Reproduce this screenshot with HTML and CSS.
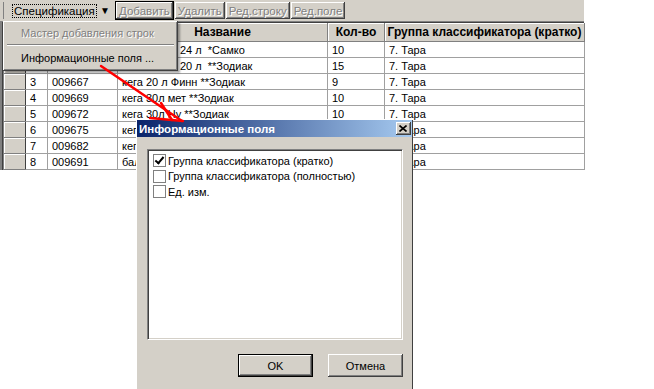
FILE: index.html
```html
<!DOCTYPE html>
<html lang="ru">
<head>
  <meta charset="UTF-8" />
  <title>Спецификация</title>
  <link rel="stylesheet" href="styles.css">
</head>
<body>
  <div class="app">
    <div class="toolbar">
      <button class="tb-btn tb-menu"><span class="focus">Спецификация</span><span class="caret">&#9660;</span></button>
      <button class="tb-btn tb-default" disabled>Добавить</button>
      <button class="tb-btn" disabled>Удалить</button>
      <button class="tb-btn" disabled>Ред.строку</button>
      <button class="tb-btn" disabled>Ред.поле</button>
    </div>

    <div class="grid">
      <table>
        <colgroup>
          <col class="c-hdr"><col class="c-num"><col class="c-code"><col class="c-name"><col class="c-qty"><col class="c-group">
        </colgroup>
        <thead>
          <tr>
            <th></th><th></th><th></th>
            <th>Название</th>
            <th>Кол-во</th>
            <th>Группа классификатора (кратко)</th>
          </tr>
        </thead>
        <tbody>
          <tr><td class="rh"></td><td>1</td><td>009660</td><td>кега пласт. 24 л  *Самко</td><td>10</td><td>7. Тара</td></tr>
          <tr><td class="rh"></td><td>2</td><td>009664</td><td>кега пласт. 20 л  **Зодиак</td><td>15</td><td>7. Тара</td></tr>
          <tr><td class="rh"></td><td>3</td><td>009667</td><td>кега 20 л Финн **Зодиак</td><td>9</td><td>7. Тара</td></tr>
          <tr><td class="rh"></td><td>4</td><td>009669</td><td>кега 30л мет **Зодиак</td><td>10</td><td>7. Тара</td></tr>
          <tr><td class="rh"></td><td>5</td><td>009672</td><td>кега 30л Ну **Зодиак</td><td>10</td><td>7. Тара</td></tr>
          <tr><td class="rh"></td><td>6</td><td>009675</td><td>кега 50 л **Зодиак</td><td>10</td><td>7. Тара</td></tr>
          <tr><td class="rh"></td><td>7</td><td>009682</td><td>кега 50 л мет **Самко</td><td>10</td><td>7. Тара</td></tr>
          <tr><td class="rh"></td><td>8</td><td>009691</td><td>баллон СО2 **Зодиак</td><td>10</td><td>7. Тара</td></tr>
        </tbody>
      </table>
    </div>
  </div>

  <!-- выпадающее меню кнопки "Спецификация" -->
  <div class="menu">
    <div class="menu-item disabled">Мастер добавления строк</div>
    <div class="menu-sep"></div>
    <div class="menu-item">Информационные поля ...</div>
  </div>

  <!-- окно выбора полей -->
  <div class="dialog">
    <div class="dlg-title">
      <span>Информационные поля</span>
      <span class="dlg-close">
        <svg width="8" height="7" viewBox="0 0 8 7"><path d="M0.5 0.5 L7.5 6.5 M7.5 0.5 L0.5 6.5" /></svg>
      </span>
    </div>
    <div class="dlg-body">
      <div class="fields">
        <label class="field"><span class="check on"></span>Группа классификатора (кратко)</label>
        <label class="field"><span class="check"></span>Группа классификатора (полностью)</label>
        <label class="field"><span class="check"></span>Ед. изм.</label>
      </div>
      <div class="dlg-buttons">
        <button class="btn btn-default">OK</button>
        <button class="btn">Отмена</button>
      </div>
    </div>
  </div>

  <svg class="pointer" width="654" height="389" viewBox="0 0 654 389">
    <line x1="101" y1="66" x2="182" y2="121" />
    <line x1="161" y1="103" x2="172" y2="120" />
    <line x1="150" y1="118" x2="183" y2="121" />
  </svg>
</body>
</html>
```

FILE: styles.css
```css
body {
  margin: 0;
  background: #fff;
  font-family: 'Liberation Sans', Arial, sans-serif;
  font-size: 11px;
  color: #000;
}

.app {
  width: 584px;
}

.toolbar {
  display: flex;
  gap: 1px;
  height: 21px;
  padding: 2px 0 0 3px;
  box-sizing: border-box;
  background: #d4d0c8;
}

.tb-btn {
  height: 17px;
  padding: 0 3px;
  font: inherit;
  font-size: 11.5px;
  background: #d4d0c8;
  border: none;
  box-shadow: inset -1px -1px #404040, inset 1px 1px #fff, inset -2px -2px #808080;
}

.tb-btn:disabled {
  color: #808080;
  text-shadow: 1px 1px #fff;
}

.tb-menu {
  display: flex;
  align-items: center;
  justify-content: space-between;
  width: 111px;
  padding: 0 4px 0 10px;
  box-shadow: inset 1px 0 #808080;
}

.focus {
  outline: 1px dotted #000;
  outline-offset: 0;
  padding: 0 1px;
}

.caret {
  font-size: 10px;
}

.tb-default {
  box-shadow: 0 0 0 1px #000, inset -1px -1px #404040, inset 1px 1px #fff, inset -2px -2px #808080;
  margin: 0 1px 0 1px;
}

.grid {
  border-top: 1px solid #808080;
  border-left: 2px solid #808080;
  box-shadow: inset 0 1px #404040, inset 1px 0 #404040;
  padding: 1px 0 0 1px;
}

.grid table {
  border-collapse: collapse;
  table-layout: fixed;
  width: 581px;
}

.c-hdr { width: 22px; }
.c-num { width: 22px; }
.c-code { width: 70px; }
.c-name { width: 210px; }
.c-qty { width: 57px; }
.c-group { width: 200px; }

th {
  height: 18px;
  padding: 0;
  font-size: 12px;
  font-weight: bold;
  background: #d4d0c8;
  border: 1px solid #808080;
  border-top: none;
  box-shadow: inset 1px 1px #fff;
}

td {
  height: 15px;
  padding: 0 4px;
  white-space: pre;
  overflow: hidden;
  border: 1px solid #a0a0a0;
}

td.rh {
  background: #d4d0c8;
  border-color: #808080;
  border-right-color: #404040;
  box-shadow: inset 1px 1px #fff;
}

.menu {
  position: absolute;
  left: 3px;
  top: 21px;
  width: 171px;
  padding: 3px 2px;
  background: #d4d0c8;
  box-shadow: inset -1px -1px #404040, inset 1px 1px #fff, inset -2px -2px #808080, 2px 2px 2px rgba(0,0,0,0.35);
}

.menu-item {
  height: 19px;
  line-height: 19px;
  padding-left: 16px;
  font-size: 11px;
}

.menu-item.disabled {
  color: #808080;
  text-shadow: 1px 1px #fff;
}

.menu-sep {
  margin: 1px 2px 3px 2px;
  border-top: 1px solid #808080;
  border-bottom: 1px solid #fff;
}

.dialog {
  position: absolute;
  left: 136px;
  top: 119px;
  width: 277px;
  height: 270px;
  padding: 1px;
  box-sizing: border-box;
  background: #d4d0c8;
  box-shadow: inset 1px 1px #fff, inset -1px 0 #404040;
}

.dlg-title {
  display: flex;
  justify-content: space-between;
  align-items: center;
  height: 17px;
  padding: 0 1px 0 2px;
  color: #fff;
  font-size: 11.5px;
  font-weight: bold;
  background: linear-gradient(to right, #0a246a, #a6caf0);
}

.dlg-close {
  display: flex;
  align-items: center;
  justify-content: center;
  width: 15px;
  height: 13px;
  background: #d4d0c8;
  box-shadow: inset -1px -1px #404040, inset 1px 1px #fff, inset -2px -2px #808080;
}

.dlg-close svg {
  margin: 0 1px 1px 0;
}

.dlg-close path {
  stroke: #000;
  stroke-width: 1.6;
  fill: none;
}

.dlg-body {
  padding: 12px 9px 0 10px;
}

.fields {
  display: flex;
  flex-direction: column;
  height: 191px;
  padding: 3px 0 0 5px;
  box-sizing: border-box;
  background: #fff;
  border: 1px solid;
  border-color: #808080 #fff #fff #808080;
  box-shadow: inset 1px 1px #404040, inset -1px -1px #d4d0c8;
}

.field {
  display: flex;
  align-items: center;
  gap: 2px;
  height: 15.5px;
  flex: none;
}

.check {
  width: 11px;
  height: 11px;
  border: 1px solid #808080;
  background: #fff;
  position: relative;
}

.check.on::after {
  content: '';
  position: absolute;
  left: 3px;
  top: 0;
  width: 3px;
  height: 7px;
  border: solid #000;
  border-width: 0 2px 2px 0;
  transform: rotate(40deg);
}

.dlg-buttons {
  display: flex;
  justify-content: flex-end;
  gap: 15px;
  margin-top: 14px;
}

.btn {
  width: 75px;
  height: 23px;
  font: inherit;
  font-size: 11px;
  background: #d4d0c8;
  border: none;
  box-shadow: inset -1px -1px #404040, inset 1px 1px #fff, inset -2px -2px #808080;
}

.btn-default {
  box-shadow: inset 0 0 0 1px #000, inset -2px -2px #404040, inset 2px 2px #fff, inset -3px -3px #808080;
}

.pointer {
  position: absolute;
  left: 0;
  top: 0;
  pointer-events: none;
}

.pointer line {
  stroke: #f00;
  stroke-width: 2.5;
  stroke-linecap: round;
}
```
